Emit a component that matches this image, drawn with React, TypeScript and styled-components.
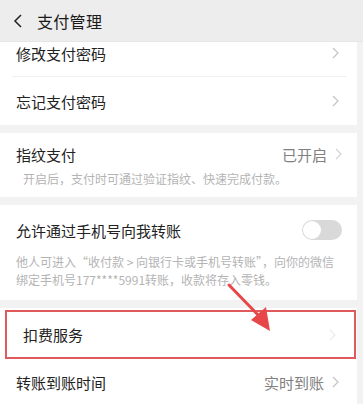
import React from "react";
import styled, { createGlobalStyle } from "styled-components";

const GlobalStyle = createGlobalStyle`
  html, body {
    margin: 0;
    padding: 0;
    background: #f2f2f2;
    font-family: "Noto Sans CJK SC", "Noto Sans", sans-serif;
  }
  * { box-sizing: border-box; }
`;

const Page = styled.div`
  position: relative;
  width: 363px;
  height: 404px;
  overflow: hidden;
  background: #f2f2f2;
`;

const Header = styled.div`
  position: relative;
  z-index: 2;
  height: 42px;
  display: flex;
  align-items: center;
  gap: 14px;
  padding-left: 13px;
  background: #ededed;
  border-bottom: 1px solid #e6e6e6;
`;

const Title = styled.div`
  font-size: 16px;
  color: #1a1a1a;
  letter-spacing: 0.3px;
`;

const Content = styled.div`
  margin-top: -13px;
  padding-right: 6px;
  display: flex;
  flex-direction: column;
  gap: 8px;
`;

const Card = styled.div`
  background: #fff;
`;

const Row = styled.div<{ $h: number; $divider?: boolean }>`
  height: ${(p) => p.$h}px;
  display: flex;
  align-items: center;
  padding: 0 18px 0 16px;
  position: relative;
  &::after {
    content: "";
    display: ${(p) => (p.$divider ? "block" : "none")};
    position: absolute;
    left: 12px;
    right: 10px;
    bottom: 0;
    height: 1px;
    background: #f1f1f1;
  }
`;

const Label = styled.div`
  flex: 1;
  font-size: 15px;
  color: #222;
`;

const Value = styled.div`
  font-size: 15px;
  color: #808080;
  margin-right: 8px;
`;

const Block = styled.div<{ $pt: number; $pb: number }>`
  padding: ${(p) => p.$pt}px 15px ${(p) => p.$pb}px 16px;
`;

const BlockHead = styled.div`
  display: flex;
  align-items: center;
  height: 22px;
`;

const Desc = styled.div<{ $indent?: number; $gap?: number }>`
  font-size: 12px;
  line-height: 18px;
  color: #b4b4b4;
  padding-left: ${(p) => p.$indent ?? 0}px;
  margin-top: ${(p) => p.$gap ?? 4}px;
`;

const Toggle = styled.div`
  width: 40px;
  height: 20px;
  border-radius: 10px;
  background: #d9d9d9;
  position: relative;
  &::before {
    content: "";
    position: absolute;
    left: 1px;
    top: 1px;
    width: 18px;
    height: 18px;
    border-radius: 50%;
    background: #fff;
  }
`;

const Highlight = styled.div`
  margin: 2px 1px 0 5px;
  border: 2px solid #e05a5c;
`;

const Chevron = ({ color = "#c4c4c4" }: { color?: string }) => (
  <svg width="7" height="12" viewBox="0 0 7 12">
    <path d="M1 1l5 5-5 5" fill="none" stroke={color} strokeWidth="1.2" />
  </svg>
);

const Arrow = styled.svg`
  position: absolute;
  left: 0;
  top: 0;
  pointer-events: none;
  z-index: 3;
`;

export default function App() {
  return (
    <Page>
      <GlobalStyle />
      <Header>
        <svg width="10" height="14" viewBox="0 0 10 14">
          <path d="M8 1L2 7l6 6" fill="none" stroke="#222" strokeWidth="1.5" />
        </svg>
        <Title>支付管理</Title>
      </Header>
      <Content>
        <Card>
          <Row $h={48} $divider>
            <Label>修改支付密码</Label>
            <Chevron />
          </Row>
          <Row $h={48}>
            <Label>忘记支付密码</Label>
            <Chevron />
          </Row>
        </Card>
        <Card>
          <Block $pt={10} $pb={9}>
            <BlockHead>
              <Label>指纹支付</Label>
              <Value>已开启</Value>
              <Chevron color="#d4d4d4" />
            </BlockHead>
            <Desc $indent={7} $gap={5}>开启后，支付时可通过验证指纹、快速完成付款。</Desc>
          </Block>
        </Card>
        <Card>
          <Block $pt={14} $pb={11}>
            <BlockHead>
              <Label>允许通过手机号向我转账</Label>
              <Toggle />
            </BlockHead>
            <Desc $gap={12}>
              他人可进入“收付款 &gt; 向银行卡或手机号转账”，向你的微信绑定手机号177****5991转账，收款将存入零钱。
            </Desc>
          </Block>
        </Card>
        <Card>
          <Highlight>
            <Row $h={45}>
              <Label>扣费服务</Label>
              <Chevron color="#ececec" />
            </Row>
          </Highlight>
          <Row $h={46}>
            <Label>转账到账时间</Label>
            <Value>实时到账</Value>
            <Chevron />
          </Row>
        </Card>
      </Content>
      <Arrow width="363" height="404" viewBox="0 0 363 404">
        <line x1="229" y1="285" x2="261" y2="318" stroke="#e8474a" strokeWidth="3" strokeLinecap="round" />
        <polygon points="270,331 251,320 266,307" fill="#e8474a" />
      </Arrow>
    </Page>
  );
}
